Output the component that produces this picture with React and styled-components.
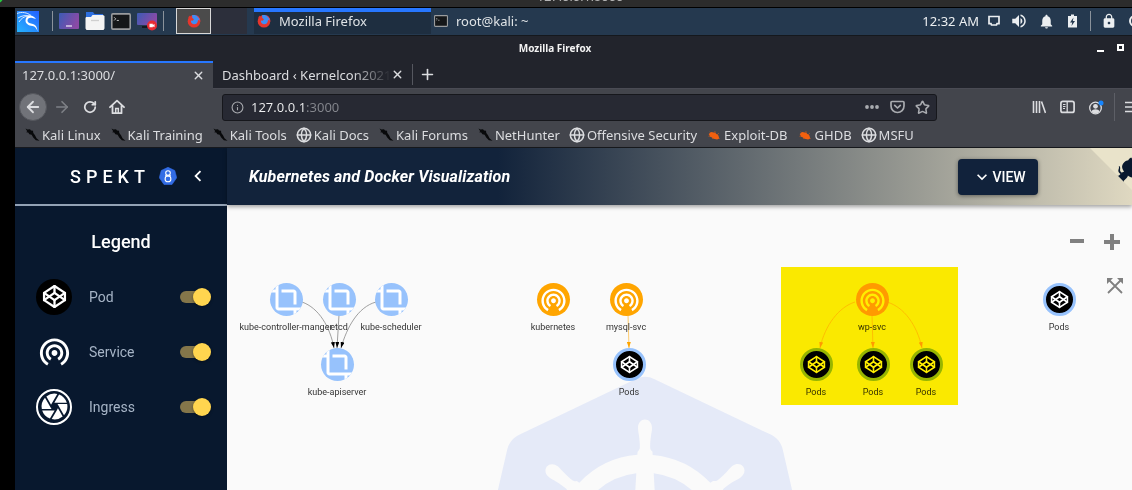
import React, { useState } from "react";
import styled, { createGlobalStyle } from "styled-components";
import { MdCrop, MdWifiTethering, MdCamera, MdVolumeUp, MdNotifications, MdLock, MdExpandMore, MdChevronLeft } from "react-icons/md";
import { SiKubernetes } from "react-icons/si";
import { Codepen, Globe, ArrowLeft, ArrowRight, RotateCw, Info, X, Plus, Star } from "lucide-react";

const ui = `"Noto Sans", sans-serif`;

const GlobalStyle = createGlobalStyle`
  * { box-sizing: border-box; }
  html, body, #root { height: 100%; }
  body { margin: 0; background: #000; overflow: hidden; font-family: ${ui}; }
  button { border: 0; padding: 0; background: none; color: inherit; font: inherit; }
  svg { display: block; flex: none; }
`;

const Screen = styled.div`
  min-height: 100%;
  display: flex;
  flex-direction: column;
  overflow: hidden;
`;
const HostBar = styled.div`
  position: relative;
  height: 8px;
  padding: 0 0 3px 28px;
  display: flex;
  justify-content: center;
  align-items: flex-end;
  overflow: hidden;
  background: #2c2c2c;
  border-bottom: 1px solid #000;
  color: #b4b4b4;
  font: 13px/14px Roboto, sans-serif;
`;
const HostDot = styled.span`
  position: absolute;
  left: -8px;
  top: -8px;
  width: 11px;
  height: 11px;
  border-radius: 50%;
  background: #28c840;
`;
const Desktop = styled.div`
  flex: 1;
  margin-left: 15px;
  display: flex;
  flex-direction: column;
`;

/* desktop panel */
const Panel = styled.div`
  height: 28px;
  padding-bottom: 1px;
  display: flex;
  align-items: stretch;
  background: #25394f;
  border-bottom: 1px solid #15181d;
  color: #dfe3e6;
  font-size: 13px;
`;
const Launchers = styled.div`
  display: flex;
  align-items: center;
  gap: 6px;
  padding: 0 12px 0 2px;
`;
const MenuButton = styled.button`
  margin-right: 7px;
`;
const Divider = styled.span`
  width: 1px;
  height: ${(p) => p.$h || 20}px;
  flex: none;
  background: ${(p) => p.$color || "#8a929b"};
`;
const Workspace = styled.button`
  width: 35px;
  display: flex;
  align-items: center;
  justify-content: center;
  background: #4b4b4b;
  border: 1px solid #d8d8d8;
`;
const EmptySpace = styled.span`
  width: 36px;
  margin-right: 7px;
  background: #2c2f3b;
`;
const Task = styled.button`
  width: ${(p) => (p.$active ? 177 : 200)}px;
  display: flex;
  align-items: center;
  gap: 8px;
  padding: 0 3px;
  background: ${(p) => (p.$active ? "#1e2e40" : "transparent")};
  box-shadow: inset 0 ${(p) => (p.$active ? 4 : 0)}px #2777ff;
  text-align: left;
`;
const Tray = styled.div`
  margin: 0 -11px 0 auto;
  display: flex;
  align-items: center;
  gap: 10px;
  color: #eceff1;
`;
const Clock = styled.time`
  margin-right: -1px;
`;

/* browser window */
const TitleBar = styled.div`
  height: 25px;
  padding-bottom: 2px;
  display: flex;
  align-items: center;
  background: #22242c;
  color: #f2f2f2;
  font-size: 10px;
  font-weight: 700;
`;
const TitleText = styled.div`
  flex: 1;
  text-align: center;
`;
const Controls = styled.div`
  width: 37px;
  display: flex;
  align-items: center;
  gap: 13px;
  padding-left: 2px;
`;
const Minimise = styled.button`
  width: 7px;
  height: 8px;
  border-bottom: 2px solid #fff;
`;
const Maximise = styled.button`
  width: 7px;
  height: 7px;
  border: 2px solid #fff;
`;
const Tabs = styled.div`
  height: 28px;
  display: flex;
  align-items: stretch;
  background: #22242c;
  border-bottom: 1px solid #4a4b54;
  color: #dcdde0;
`;
const Tab = styled.div`
  width: ${(p) => (p.$active ? 198 : 199)}px;
  display: flex;
  align-items: center;
  justify-content: space-between;
  padding: 0 8px 2px;
  padding-left: ${(p) => (p.$active ? 7 : 9)}px;
  border-top: 2px solid ${(p) => (p.$active ? "#2777ff" : "transparent")};
  background: ${(p) => (p.$active ? "#43454c" : "transparent")};
  margin-bottom: ${(p) => (p.$active ? -1 : 0)}px;
`;
const TabTitle = styled.button`
  flex: 1;
  overflow: hidden;
  white-space: nowrap;
  text-align: left;
  font-size: 13px;
  line-height: 20px;
  mask-image: ${(p) => (p.$fade ? "linear-gradient(90deg, #000 130px, transparent 169px)" : "none")};
`;
const NewTab = styled.button`
  display: flex;
  align-items: center;
  padding: 0 6px;
  margin: 3px 0;
  border-left: 1px solid #55575f;
`;
const Toolbar = styled.div`
  height: 36px;
  display: flex;
  align-items: center;
  background: #43454c;
  color: #dcdde0;
`;
const NavButtons = styled.div`
  width: 207px;
  display: flex;
  align-items: center;
  gap: 12px;
  padding-left: 4px;
`;
const Back = styled.button`
  width: 28px;
  height: 28px;
  margin-right: -6px;
  display: flex;
  align-items: center;
  justify-content: center;
  border-radius: 50%;
  border: 1px solid #55575d;
  background: #717379;
`;
const Faded = styled.button`
  color: #7e8086;
`;
const UrlBox = styled.label`
  flex: 1;
  max-width: 715px;
  height: 27px;
  display: flex;
  align-items: center;
  gap: 7px;
  padding: 0 6px 0 8px;
  border: 1px solid #16171c;
  border-radius: 3px;
  background: #272933;
  color: #a9abb0;
`;
const UrlInput = styled.input`
  flex: 1;
  min-width: 0;
  border: 0;
  padding: 0;
  outline: 0;
  font: 13px/20px ${ui};
  color: transparent;
  background: linear-gradient(90deg, #eff0f1 53px, #85878e 53px);
  -webkit-background-clip: text;
  background-clip: text;
`;
const UrlActions = styled.div`
  display: flex;
  align-items: center;
  gap: 10px;
`;
const ToolIcons = styled.div`
  margin: 0 -8px 0 auto;
  display: flex;
  align-items: center;
  gap: 10px;
`;
const ToolGroup = styled.div`
  display: flex;
  align-items: center;
  gap: 14px;
`;
const Bookmarks = styled.nav`
  height: 23px;
  display: flex;
  align-items: flex-start;
  gap: 9px;
  padding: 0 9px;
  overflow: hidden;
  background: #43454c;
  border-bottom: 1px solid #17191e;
`;
const Bookmark = styled.a`
  display: flex;
  align-items: center;
  gap: 2px;
  color: #dcdde0;
  text-decoration: none;
  white-space: nowrap;
  font-size: 13px;
  line-height: 20px;
`;

/* web page */
const Page = styled.div`
  flex: 1;
  display: flex;
  background: #fafafa;
  font-family: Roboto, sans-serif;
`;
const Sidebar = styled.aside`
  width: 212px;
  flex: none;
  background: #08182e;
  color: #fff;
`;
const Brand = styled.div`
  height: 58px;
  display: flex;
  align-items: center;
  padding-left: 55px;
  border-bottom: 2px solid #93a2b5;
`;
const BrandName = styled.span`
  width: 89px;
  font-size: 18px;
  font-weight: 500;
  letter-spacing: 5px;
`;
const Mark = styled.span`
  display: flex;
  margin-right: 10px;
`;
const LegendTitle = styled.h2`
  margin: 24px 0 15px;
  text-align: center;
  font-size: 18px;
  line-height: 24px;
  font-weight: 500;
`;
const LegendRow = styled.label`
  height: 55px;
  display: flex;
  align-items: center;
  padding: 0 16px 0 21px;
  color: #a6b4c6;
  font-size: 14px;
`;
const LegendIcon = styled.span`
  width: 36px;
  height: 36px;
  margin-right: 17px;
  display: flex;
  align-items: center;
  justify-content: center;
  border-radius: 50%;
  color: #fff;
  background: ${(p) => (p.$kind === "pod" ? "#000" : "transparent")};
  border: ${(p) => (p.$kind === "ingress" ? "2px solid #fff" : "0")};
`;
const Toggle = styled.input`
  appearance: none;
  position: relative;
  width: 31px;
  height: 18px;
  margin: 0 0 0 auto;
  display: flex;
  align-items: center;
  justify-content: ${(p) => (p.checked ? "flex-end" : "flex-start")};
  &::after {
    content: "";
    position: absolute;
    inset: 3px 3px 3px 0;
    border-radius: 6px;
    background: #84764a;
  }
  &::before {
    content: "";
    z-index: 1;
    width: 18px;
    height: 18px;
    border-radius: 50%;
    background: #ffd54f;
    box-shadow: 0 1px 3px rgba(0, 0, 0, 0.4);
  }
`;
const Main = styled.main`
  flex: 1;
  min-width: 0;
  display: flex;
  flex-direction: column;
`;
const Header = styled.header`
  position: relative;
  z-index: 1;
  height: 57px;
  display: flex;
  align-items: center;
  justify-content: space-between;
  padding: 0 94px 0 22px;
  background: linear-gradient(90deg, #12233b 30%, #e2dbc3 101%);
  box-shadow: 0 2px 4px rgba(0, 0, 0, 0.35);
  color: #fff;
`;
const Heading = styled.h1`
  margin: 0;
  font-size: 16px;
  font-weight: 700;
  font-style: italic;
  letter-spacing: 0.0075em;
`;
const ViewButton = styled.button`
  width: 80px;
  height: 36px;
  display: flex;
  align-items: center;
  justify-content: center;
  padding-left: 2px;
  border-radius: 4px;
  background: #11223b;
  box-shadow: 0 1px 4px rgba(0, 0, 0, 0.45);
  font-size: 14px;
  font-weight: 500;
`;
const Corner = styled.a`
  position: absolute;
  top: 0;
  right: -18px;
  color: #08182e;
`;
const Canvas = styled.div`
  position: relative;
  flex: 1;
  overflow: hidden;
`;
const Watermark = styled.div`
  position: absolute;
  left: 251px;
  top: 167px;
  color: #e5eaf8;
`;
const Edges = styled.svg`
  position: absolute;
  left: 0;
  top: 0;
`;
const Node = styled.div`
  position: absolute;
  left: ${(p) => p.$x - 60}px;
  top: ${(p) => p.$y - 16}px;
  width: 120px;
  display: flex;
  flex-direction: column;
  align-items: center;
  gap: 4px;
  color: #343434;
  font-size: 9px;
  line-height: 14px;
  white-space: nowrap;
`;
const Disc = styled.span`
  width: 33px;
  height: 33px;
  display: flex;
  align-items: center;
  justify-content: center;
  overflow: hidden;
  border-radius: 50%;
  color: #fff;
  background: ${(p) => ({ pod: "#000", service: "#ffa500", kube: "#97c2fc" })[p.$kind]};
  border: ${(p) => (p.$kind === "pod" ? "3px solid #97c2fc" : "0")};
`;
const Highlight = styled.div`
  position: absolute;
  left: 554px;
  top: 62px;
  width: 177px;
  height: 138px;
  background: #ffee00;
  mix-blend-mode: multiply;
`;
const ZoomTools = styled.div`
  position: absolute;
  top: 29px;
  right: 9px;
  width: 54px;
  display: flex;
  flex-wrap: wrap;
  justify-content: space-between;
  align-items: center;
  row-gap: 28px;
  color: #808080;
`;
const FitButton = styled.button`
  margin-left: auto;
`;

const FirefoxLogo = () => (
  <svg width="14" height="14" viewBox="0 0 14 14">
    <circle cx="7" cy="7.3" r="6.3" fill="#e5352c" />
    <path d="M1 4.5 2.3 1.6l1 1.6 1.6-.6z" fill="#e5352c" />
    <path d="M5 1.2C9 .2 12.6 2.6 13 6.4l-2-.4c0 3-2 4.6-4.2 4.3C4.7 10 3.6 8.3 4 6.5l1.6.2L7 5.2 5.3 4z" fill="#3f8cf4" />
    <path d="M9 1c2.8 1 4.5 3.6 4.3 6.8C12.6 4.5 11 3 9 1z" fill="#e33b55" />
  </svg>
);

const Terminal = ({ w = 19, h = 16 }) => (
  <svg width={w} height={h} viewBox="0 0 19 16">
    <rect x=".75" y=".75" width="17.5" height="14.5" rx="1" fill="#151719" stroke="#9a9c9e" strokeWidth="1.5" />
    <path d="M3 4l1.5 1.5L3 7M5.5 7h2" fill="none" stroke="#ddd" strokeWidth=".8" />
  </svg>
);

const KaliLogo = () => (
  <svg width="22" height="21" viewBox="0 0 22 21">
    <defs>
      <linearGradient id="kali" x1="0" x2="1" y1="1" y2="0">
        <stop offset="0" stopColor="#25b4ff" />
        <stop offset="1" stopColor="#2460ff" />
      </linearGradient>
    </defs>
    <rect x="0" y="0" width="22" height="21" fill="url(#kali)" />
    <path d="M0 2.5C5 .5 10 1.5 14 4.5M1 7c4-2.5 8-3 12-2M2 11c2-3.5 5-5.5 9-6" fill="none" stroke="#d5e8ff" strokeWidth="1" />
    <path d="M12 4.5c3-.5 5 1 7 3.5l-3.5-1c-3-1-5 .5-5 2.5 0 2.5 3 3 5.5 3.5 3 .8 4.3 3.2 4.5 7.5-1-3.5-2.3-5-5-5.5-4-.6-7-2-7-5.5 0-2.500 1.500-4.300 3.500-5z" fill="#fff" />
  </svg>
);

const DesktopIcon = ({ record }) => (
  <svg width="20" height="20" viewBox="0 0 20 20">
    <defs>
      <linearGradient id={record ? "deskB" : "deskA"} x1="0" x2="1" y1="0" y2=".4">
        <stop offset="0" stopColor="#3c5bb5" />
        <stop offset="1" stopColor="#8a4aa6" />
      </linearGradient>
    </defs>
    <rect x="0" y="2" width="20" height={record ? 12 : 16} rx="1" fill={`url(#${record ? "deskB" : "deskA"})`} />
    {record ? (
      <>
        <path d="M5 16h9" stroke="#14181f" strokeWidth="2" />
        <circle cx="15" cy="14.5" r="5" fill="#e82c34" />
        <path d="M12.5 12.8h3.300v1.200l1.700-1v3.200l-1.700-1v1h-3.300z" fill="#fff" />
      </>
    ) : (
      <path d="M7 15h6" stroke="#e8e4f5" strokeWidth="1.3" />
    )}
  </svg>
);

const Folder = () => (
  <svg width="20" height="20" viewBox="0 0 20 20">
    <path d="M1 1h7l1.500 2H18v6H1z" fill="#2d6fe0" />
    <path d="M1 6h5l1.500-2H18l1.500 1v12.500L18.500 19h-17L.5 17.500V7z" fill="#f4f4f4" />
    <path d="M6 9.500h8" stroke="#cfcfcf" strokeWidth="1.3" />
  </svg>
);

const Home = () => (
  <svg width="16" height="16" viewBox="0 0 16 16" fill="none" stroke="currentColor" strokeWidth="1.8">
    <path d="M1 8.200 8 1.700l7 6.500M3.500 7v7.200h9V7" strokeLinecap="round" strokeLinejoin="round" />
    <path d="M6.700 14V9.500h2.600V14" strokeWidth="1.5" />
  </svg>
);

const Dots = () => (
  <svg width="16" height="16" viewBox="0 0 16 16" fill="currentColor">
    <circle cx="3" cy="8" r="1.9" /><circle cx="8" cy="8" r="1.9" /><circle cx="13" cy="8" r="1.9" />
  </svg>
);

const Pocket = () => (
  <svg width="15" height="14" viewBox="0 0 15 14" fill="none" stroke="currentColor" strokeWidth="1.7" strokeLinecap="round" strokeLinejoin="round">
    <path d="M2 1.500h11a1 1 0 0 1 1 1V6A6.500 6.500 0 0 1 1 6V2.500a1 1 0 0 1 1-1zM4.700 5.300 7.500 8l2.800-2.700" />
  </svg>
);

const Library = () => (
  <svg width="14" height="14" viewBox="0 0 14 14" stroke="currentColor" strokeWidth="1.6">
    <path d="M1.500 1v12M4.500 1v12M7.500 1v12M9.500 1.500l4 11.500" />
  </svg>
);

const SidebarIcon = () => (
  <svg width="15" height="14" viewBox="0 0 15 14" fill="none" stroke="currentColor">
    <rect x=".9" y="1.4" width="13.2" height="11" rx="2" strokeWidth="1.7" />
    <path d="M7.200 1.500v11" strokeWidth="1.3" />
    <path d="M3 4.500h2.500M3 6.500h2.500M3 8.500h2" />
  </svg>
);

const Account = () => (
  <svg width="15" height="15" viewBox="0 0 15 15">
    <circle cx="6.5" cy="8" r="5.8" fill="none" stroke="currentColor" strokeWidth="1.3" />
    <circle cx="6.5" cy="6.3" r="2.4" fill="currentColor" />
    <path d="M2.500 11.500c1-3 7-3 8 0-2 2.600-6 2.600-8 0z" fill="currentColor" />
    <circle cx="12" cy="3" r="2.5" fill="#1585ff" />
  </svg>
);

const Monitor = () => (
  <svg width="12" height="12" viewBox="0 0 12 12" fill="none" stroke="currentColor" strokeWidth="1.7">
    <path d="M1 1.500h10v7.200H9L8.500 10h-5L3 8.700H1z" />
  </svg>
);

const Battery = () => (
  <svg width="15" height="14" viewBox="0 0 15 14">
    <path d="M6 .5h3V2h3v11.500H3V2h3z" fill="currentColor" />
    <path d="M8.500 3.500 5 8.500h2.200L6.500 12 10 7H7.800z" fill="#25394f" />
  </svg>
);

const Menu = () => (
  <svg width="15" height="14" viewBox="0 0 15 14">
    <path d="M0 2.500h15M0 7h15M0 11.500h15" stroke="currentColor" strokeWidth="1.6" />
  </svg>
);

const KaliMark = () => (
  <svg width="16" height="16" viewBox="0 0 16 16">
    <path d="M1.500 1.500 3.500 2.400 6 2.200l1 1.200 2 .4.300 2.200L11 8.200l1.500 3 3 2.600-3.600-.6L9.200 10.500 7.600 7.800 5.400 7.200 4.200 5.500l-2-.2 1-1z" fill="#08090b" />
  </svg>
);

const Bug = () => (
  <svg width="16" height="16" viewBox="-2 -1 18 18">
    <path d="M1 7 4 4.500l4 1 4 3 .8 3.300-2.300 1.200-4-.8L2.500 9.500z" fill="#f2600f" />
    <path d="M2 4.500 5 7M8 3.500 8.500 7M12.500 6 9 9M.8 9.500 5 9M5 12.500 7 10M13.500 12 10 10" stroke="#f2600f" strokeWidth=".6" />
  </svg>
);

const Heptagon = () => (
  <svg width="18" height="18" viewBox="0 0 18 18">
    <path d="M9 .3 15.800 3.500 17.700 10.800 13 17.500H5L.3 10.800 2.200 3.500z" fill="#326ce5" stroke="#326ce5" strokeLinejoin="round" strokeWidth=".6" />
    <circle cx="9" cy="6" r="2.3" fill="none" stroke="#fff" strokeWidth="1.1" />
    <circle cx="9" cy="11.9" r="2.9" fill="none" stroke="#fff" strokeWidth="1.1" />
    <path d="M6 8.800h6" stroke="#fff" strokeWidth="1" />
  </svg>
);

const Octocat = () => (
  <svg width="60" height="60" viewBox="0 0 250 250">
    <path d="M0,0 L250,250 L250,0 Z" fill="#e9e3ca" />
    <path fill="currentColor" d="M128.300,109 C113.800,99.700 119,89.600 119,89.600 C122,82.700 120.500,78.600 120.500,78.600 C119.200,72 123.400,76.300 123.400,76.300 C127.300,80.900 125.500,87.300 125.500,87.300 C122.900,97.600 130.600,101.900 134.400,103.200" />
    <path fill="currentColor" d="M115,115 C114.900,115.100 118.700,116.500 119.800,115.400 L133.700,101.600 C136.900,99.200 139.900,98.400 142.200,98.600 C133.800,88 127.500,74.400 143.800,58 C148.500,53.400 154,51.200 159.700,51 C160.300,49.400 163.200,43.600 171.400,40.100 C171.400,40.100 176.100,42.500 178.800,56.200 C183.100,58.600 187.200,61.800 190.900,65.400 C194.500,69 197.700,73.200 200.100,77.600 C213.800,80.200 216.300,84.900 216.300,84.900 C212.700,93.100 206.900,96 205.400,96.600 C205.100,102.400 203,107.800 198.300,112.500 C181.900,128.900 168.300,122.500 157.700,114.100 C157.900,116.900 156.700,120.900 152.700,124.900 L141,136.500 C139.800,137.700 141.600,141.900 141.800,141.800 Z" />
  </svg>
);

const bookmarks = [
  ["Kali Linux", "kali"],
  ["Kali Training", "kali"],
  ["Kali Tools", "kali"],
  ["Kali Docs", "globe"],
  ["Kali Forums", "kali"],
  ["NetHunter", "kali"],
  ["Offensive Security", "globe"],
  ["Exploit-DB", "bug"],
  ["GHDB", "bug"],
  ["MSFU", "globe"],
];
const bookmarkIcons = {
  kali: <KaliMark />,
  globe: <Globe size={16} strokeWidth={2.3} />,
  bug: <Bug />,
};

const nodes = [
  { x: 59, y: 94, kind: "kube", label: "kube-controller-manger" },
  { x: 112, y: 94, kind: "kube", label: "etcd" },
  { x: 164, y: 94, kind: "kube", label: "kube-scheduler" },
  { x: 110, y: 159, kind: "kube", label: "kube-apiserver" },
  { x: 326, y: 94, kind: "service", label: "kubernetes" },
  { x: 399, y: 94, kind: "service", label: "mysql-svc" },
  { x: 402, y: 159, kind: "pod", label: "Pods" },
  { x: 645, y: 94, kind: "service", label: "wp-svc" },
  { x: 589, y: 159, kind: "pod", label: "Pods" },
  { x: 646, y: 159, kind: "pod", label: "Pods" },
  { x: 699, y: 159, kind: "pod", label: "Pods" },
  { x: 832, y: 94, kind: "pod", label: "Pods" },
];

const edges = [
  ["M75 97C92 103 103 122 107 143", "k"],
  ["M112 110L110 143", "k"],
  ["M149 97C131 102 120 122 114 143", "k"],
  ["M401 110L402 143", "o"],
  ["M628 97C612 102 598 120 593 143", "o"],
  ["M645 110L646 143", "o"],
  ["M660 97C677 102 690 120 695 143", "o"],
];

const nodeIcons = {
  kube: <MdCrop size={36} />,
  service: <MdWifiTethering size={29} />,
  pod: <Codepen size={19} strokeWidth={2} />,
};

const legend = [
  ["Pod", "pod", <Codepen size={25} strokeWidth={2.2} key="p" />],
  ["Service", "service", <MdWifiTethering size={35} key="s" />],
  ["Ingress", "ingress", <MdCamera size={31} key="i" />],
];

function LegendItem({ name, kind, icon }) {
  const [on, setOn] = useState(true);
  return (
    <LegendRow>
      <LegendIcon $kind={kind}>{icon}</LegendIcon>
      {name}
      <Toggle type="checkbox" checked={on} onChange={() => setOn(!on)} />
    </LegendRow>
  );
}

export default function App() {
  return (
    <Screen>
      <GlobalStyle />
      <HostBar><HostDot />127.0.0.1:3000</HostBar>
      <Desktop>
        <Panel>
          <Launchers>
            <MenuButton aria-label="Applications"><KaliLogo /></MenuButton>
            <Divider />
            <DesktopIcon />
            <Folder />
            <Terminal w={20} h={17} />
            <DesktopIcon record />
            <Divider />
          </Launchers>
          <Workspace aria-label="Workspace 1"><FirefoxLogo /></Workspace>
          <EmptySpace />
          <Task $active><FirefoxLogo />Mozilla Firefox</Task>
          <Task><Terminal w={14} h={12} />root@kali: ~</Task>
          <Tray>
            <Clock>12:32 AM</Clock>
            <Monitor />
            <MdVolumeUp size={18} />
            <MdNotifications size={17} />
            <Battery />
            <Divider />
            <MdLock size={16} />
            <svg width="16" height="14" viewBox="0 0 16 14"><circle cx="8" cy="7" r="5" fill="none" stroke="currentColor" strokeWidth="2" /></svg>
          </Tray>
        </Panel>

        <TitleBar>
          <TitleText>Mozilla Firefox</TitleText>
          <Controls>
            <Minimise aria-label="Minimise" />
            <Maximise aria-label="Maximise" />
          </Controls>
        </TitleBar>
        <Tabs>
          <Tab $active>
            <TabTitle>127.0.0.1:3000/</TabTitle>
            <button aria-label="Close tab"><X size={13} strokeWidth={2.5} /></button>
          </Tab>
          <Tab>
            <TabTitle $fade>Dashboard ‹ Kernelcon2021</TabTitle>
            <button aria-label="Close tab"><X size={13} strokeWidth={2.5} /></button>
          </Tab>
          <NewTab aria-label="New tab"><Plus size={17} strokeWidth={2.3} /></NewTab>
        </Tabs>
        <Toolbar>
          <NavButtons>
            <Back aria-label="Back"><ArrowLeft size={18} strokeWidth={2.4} /></Back>
            <Faded aria-label="Forward"><ArrowRight size={18} strokeWidth={2.2} /></Faded>
            <button aria-label="Reload"><RotateCw size={14} strokeWidth={3} /></button>
            <button aria-label="Home"><Home /></button>
          </NavButtons>
          <UrlBox>
            <Info size={13} strokeWidth={2} />
            <UrlInput defaultValue="127.0.0.1:3000" aria-label="Address" />
            <UrlActions>
              <Dots />
              <Pocket />
              <Star size={15} strokeWidth={2.5} />
            </UrlActions>
          </UrlBox>
          <ToolIcons>
            <ToolGroup>
              <Library />
              <SidebarIcon />
              <Account />
            </ToolGroup>
            <Divider $h={28} $color="#5d5f66" />
            <Menu />
          </ToolIcons>
        </Toolbar>
        <Bookmarks>
          {bookmarks.map(([name, icon]) => (
            <Bookmark href="#" key={name}>{bookmarkIcons[icon]}{name}</Bookmark>
          ))}
        </Bookmarks>

        <Page>
          <Sidebar>
            <Brand>
              <BrandName>SPEKT</BrandName>
              <Mark><Heptagon /></Mark>
              <button aria-label="Collapse"><MdChevronLeft size={22} /></button>
            </Brand>
            <LegendTitle>Legend</LegendTitle>
            {legend.map(([name, kind, icon]) => (
              <LegendItem key={name} name={name} kind={kind} icon={icon} />
            ))}
          </Sidebar>
          <Main>
            <Header>
              <Heading>Kubernetes and Docker Visualization</Heading>
              <ViewButton><MdExpandMore size={20} />VIEW</ViewButton>
              <Corner href="#" aria-label="Source code"><Octocat /></Corner>
            </Header>
            <Canvas>
              <Watermark><SiKubernetes size={334} /></Watermark>
              <Edges width="900" height="285" fill="none">
                <defs>
                  <marker id="tip-k" viewBox="0 0 6 4" refX="6" refY="2" markerWidth="6" markerHeight="4" markerUnits="userSpaceOnUse" orient="auto">
                    <path d="M0 0 6 2 0 4z" fill="#000" />
                  </marker>
                  <marker id="tip-o" viewBox="0 0 6 4" refX="6" refY="2" markerWidth="6" markerHeight="4" markerUnits="userSpaceOnUse" orient="auto">
                    <path d="M0 0 6 2 0 4z" fill="#ffa500" />
                  </marker>
                </defs>
                {edges.map(([d, tone]) => (
                  <path key={d} d={d} stroke={tone === "k" ? "#888" : "#ffc04d"} strokeWidth=".8" markerEnd={`url(#tip-${tone})`} />
                ))}
              </Edges>
              {nodes.map((n) => (
                <Node key={n.x + "-" + n.y} $x={n.x} $y={n.y}>
                  <Disc $kind={n.kind}>{nodeIcons[n.kind]}</Disc>
                  {n.label}
                </Node>
              ))}
              <Highlight />
              <ZoomTools>
                <button aria-label="Zoom out">
                  <svg width="20" height="16" viewBox="0 0 20 16"><path d="M1 7h14" stroke="currentColor" strokeWidth="4" /></svg>
                </button>
                <button aria-label="Zoom in">
                  <svg width="22" height="16" viewBox="0 0 22 16"><path d="M3 8h16M11 0v16" stroke="currentColor" strokeWidth="4" /></svg>
                </button>
                <FitButton aria-label="Fit to view">
                  <svg width="16" height="16" viewBox="0 0 16 16">
                    <path d="M1 1 15 15M15 1 1 15" stroke="currentColor" strokeWidth="1.8" />
                    <path d="M0 0h6L0 6zM16 0h-6l6 6z" fill="currentColor" />
                  </svg>
                </FitButton>
              </ZoomTools>
            </Canvas>
          </Main>
        </Page>
      </Desktop>
    </Screen>
  );
}
